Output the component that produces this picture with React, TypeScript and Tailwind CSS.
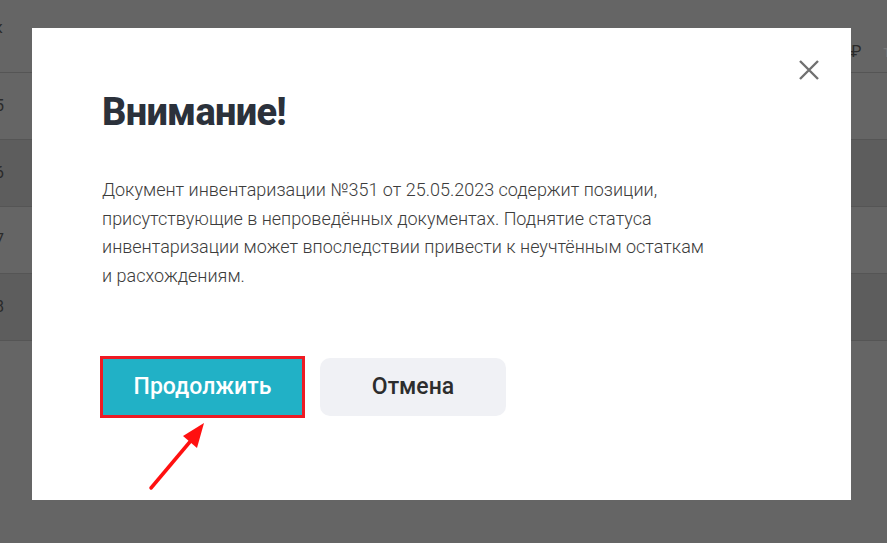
const ROWS = [
  { left: "5", dark: false },
  { left: "6", dark: true },
  { left: "7", dark: false },
  { left: "8", dark: true },
];

const App = () => {
  return (
    <div className="relative w-[887px] h-[543px] overflow-hidden bg-[#656565] font-['Roboto',sans-serif]">
      {/* ── Table behind the overlay ── */}
      <div className="flex flex-col">
        <div className="h-[73px] flex items-center justify-between border-b border-[#555] text-[#2a2a2a] text-[16px]">
          <span className="-ml-[6px] -mt-[17px]">к</span>
          <span className="flex gap-[22px] -mr-[4px] mt-[32px]">
            <span>₽</span>
            <span className="text-[#777]">т</span>
          </span>
        </div>
        {ROWS.map((r) => (
          <div
            key={r.left}
            className={`h-[67px] flex items-center border-b border-[#555] text-[#2a2a2a] text-[16px] ${r.dark ? "bg-[#5d5d5d]" : "bg-[#656565]"}`}
          >
            <span className="-ml-[5px]">{r.left}</span>
          </div>
        ))}
      </div>

      {/* ── Modal ── */}
      <div className="absolute left-[32px] top-[28px] w-[819px] h-[472px] bg-white">
        <button className="absolute left-[767px] top-[32px]">
          <svg width="20" height="20" viewBox="0 0 20 20">
            <path d="M1 1 L19 19 M19 1 L1 19" stroke="#707070" strokeWidth="2.4" />
          </svg>
        </button>

        <div className="pl-[70px] pt-[62px]">
          <h2 className="text-[38px] font-extrabold text-[#2b313b] leading-[44px] tracking-[-0.7px]">
            Внимание!
          </h2>
          <p className="mt-[42px] w-[700px] text-[18px] font-light leading-[28.5px] text-[#3c3c3c]">
            Документ инвентаризации №351 от 25.05.2023 содержит позиции,
            <br />
            присутствующие в непроведённых документах. Поднятие статуса
            <br />
            инвентаризации может впоследствии привести к неучтённым остаткам
            <br />и расхождениям.
          </p>

          <div className="mt-[66px] flex items-center gap-[15px]">
            <div className="border-[3px] border-[#ee1b24] -ml-[2px]">
              <button className="w-[199px] h-[56px] bg-[#21b1c6] text-white text-[23px] font-medium">
                Продолжить
              </button>
            </div>
            <button className="w-[186px] h-[58px] rounded-[10px] bg-[#f0f1f5] text-[#2d2d2d] text-[23px] font-medium">
              Отмена
            </button>
          </div>
        </div>

        {/* ── Annotation arrow ── */}
        <svg className="absolute left-[110px] top-[392px]" width="70" height="75" viewBox="0 0 70 75">
          <line x1="9" y1="68" x2="52" y2="17" stroke="#ff1010" strokeWidth="3.5" strokeLinecap="round" />
          <polygon points="62,3 41,16 55,28" fill="#ff1010" />
        </svg>
      </div>
    </div>
  );
};

export default App;
